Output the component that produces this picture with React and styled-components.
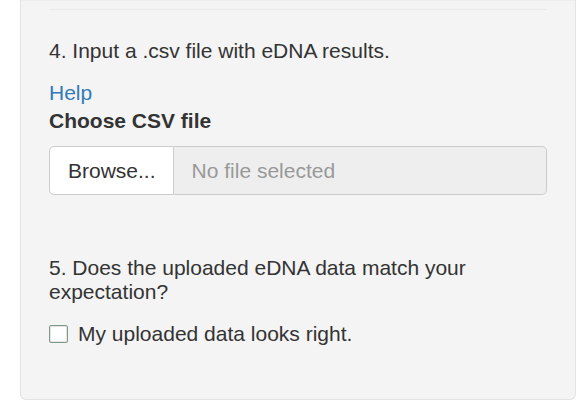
import React from 'react'
import styled, { createGlobalStyle } from 'styled-components'

const GlobalStyle = createGlobalStyle`
  html, body {
    margin: 0;
    padding: 0;
    background: #fff;
  }
  body {
    font-family: "Liberation Sans", Arial, Helvetica, sans-serif;
    font-size: 21px;
    color: #333;
  }
`

const Page = styled.div`
  padding-left: 20px;
  width: 556px;
`

const Well = styled.div`
  background: #f4f4f4;
  border: 1px solid #e3e3e3;
  border-top: none;
  border-radius: 0 0 6px 6px;
  box-shadow: inset 0 1px 1px rgba(0, 0, 0, 0.03);
  padding: 9px 28px 51px 28px;
`

const Rule = styled.hr`
  margin: 0;
  border: 0;
  border-top: 1px solid #e9e9e9;
`

const Step = styled.p`
  margin: ${p => p.$top}px 0 0 0;
  line-height: ${p => p.$lh || 28}px;
`

const HelpLink = styled.a`
  display: block;
  margin-top: 14px;
  line-height: 28px;
  color: #337ab7;
  text-decoration: none;
`

const FieldLabel = styled.label`
  display: block;
  font-weight: bold;
  line-height: 28px;
`

const InputGroup = styled.div`
  display: flex;
  margin-top: 11px;
  height: 49px;
`

const BrowseButton = styled.span`
  display: flex;
  align-items: center;
  padding: 0 17px 0 18px;
  background: #fff;
  border: 1px solid #ccc;
  border-radius: 5px 0 0 5px;
  color: #333;
`

const FileName = styled.span`
  flex: 1;
  display: flex;
  align-items: center;
  padding: 0 18px;
  background: #eee;
  border: 1px solid #ccc;
  border-left: none;
  border-radius: 0 5px 5px 0;
  color: #999;
`

const CheckRow = styled.label`
  display: flex;
  align-items: center;
  gap: 10px;
  margin-top: 16px;
  line-height: 28px;
`

const Box = styled.span`
  display: inline-block;
  box-sizing: border-box;
  width: 19px;
  height: 18px;
  background: #fff;
  border: 1px solid #7c9a88;
  border-radius: 2px;
  box-shadow: inset 0 0 0 1px #e4e4e4;
`

export default function App() {
  return (
    <>
      <GlobalStyle />
      <Page>
        <Well>
          <Rule />
          <Step $top={27}>4. Input a .csv file with eDNA results.</Step>
          <HelpLink href="#">Help</HelpLink>
          <FieldLabel>Choose CSV file</FieldLabel>
          <InputGroup>
            <BrowseButton>Browse...</BrowseButton>
            <FileName>No file selected</FileName>
          </InputGroup>
          <Step $top={61} $lh={24}>5. Does the uploaded eDNA data match your expectation?</Step>
          <CheckRow>
            <Box />
            <span>My uploaded data looks right.</span>
          </CheckRow>
        </Well>
      </Page>
    </>
  )
}
